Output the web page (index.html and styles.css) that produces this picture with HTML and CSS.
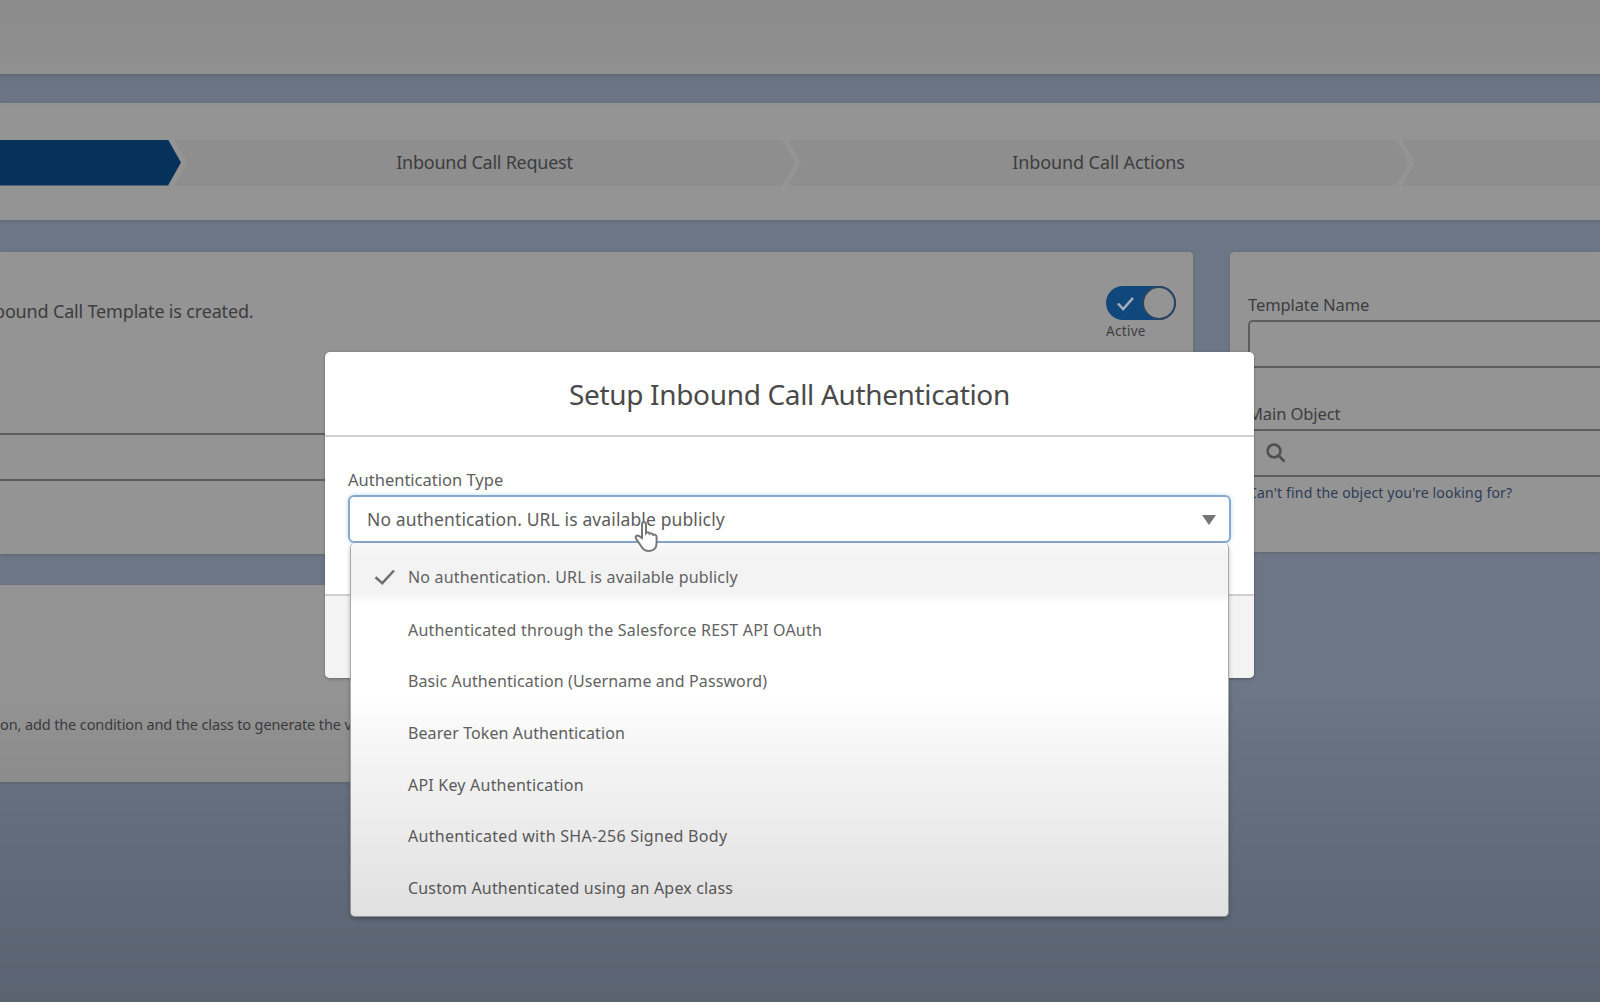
FILE: index.html
```html
<!DOCTYPE html>
<html lang="en">
<head>
    <meta charset="UTF-8" />
    <meta name="viewport" content="width=device-width, initial-scale=1.0"/>
    <title>Setup Inbound Call Authentication</title>
    <link rel="stylesheet" href="styles.css">
</head>
<body>
    <div class="page">
        <header class="page-header"></header>
        <nav class="path">
            <div class="step current"></div>
            <div class="step request">Inbound Call Request</div>
            <div class="step actions">Inbound Call Actions</div>
            <div class="step"></div>
        </nav>
        <main class="columns">
            <div class="main-column">
                <section class="card details">
                    <div class="details-top">
                        <p class="intro">bound Call Template is created.</p>
                        <div class="toggle">
                            <div class="switch">
                                <svg class="switch-check" viewBox="0 0 20 16"><path d="M2 8l5.500 6L18 2"/></svg>
                                <span class="knob"></span>
                            </div>
                            <span class="toggle-label">Active</span>
                        </div>
                    </div>
                    <div class="wide-field"></div>
                </section>
                <section class="card condition">
                    <p class="hint">on, add the condition and the class to generate the v</p>
                </section>
            </div>
            <aside class="card side">
                <p class="label name-label">Template Name</p>
                <div class="field"></div>
                <p class="label object-label">Main Object</p>
                <div class="field lookup">
                    <svg class="search" viewBox="0 0 20 20"><circle cx="8" cy="8" r="6.4"/><path d="M12.500 12.500l6 6"/></svg>
                </div>
                <a class="help">Can't find the object you're looking for?</a>
            </aside>
        </main>
    </div>

    <div class="modal">
        <div class="modal-header"><h2>Setup Inbound Call Authentication</h2></div>
        <div class="modal-body">
            <p class="auth-label">Authentication Type</p>
            <div class="combobox">
                <span class="combo-value">No authentication. URL is available publicly</span>
                <span class="arrow"></span>
                <ul class="dropdown">
                    <li class="selected">
                        <svg class="check" viewBox="0 0 22 16"><path d="M1.500 8.200l6.800 6L20 1.500"/></svg>
                        <span>No authentication. URL is available publicly</span>
                    </li>
                    <li class="wide">Authenticated through the Salesforce REST API OAuth</li>
                    <li class="narrow">Basic Authentication (Username and Password)</li>
                    <li class="narrow">Bearer Token Authentication</li>
                    <li class="wide">API Key Authentication</li>
                    <li class="widest">Authenticated with SHA-256 Signed Body</li>
                    <li>Custom Authenticated using an Apex class</li>
                </ul>
            </div>
        </div>
        <div class="modal-footer"></div>
    </div>

    <svg class="cursor" viewBox="0 0 26 34"><path d="M9 19V5.500c0-3.400 4-3.400 4 0V14c1-1.200 3.200-.8 3.600.8 1.200-1 3-.4 3.400 1 1.600-.8 3.600.2 3.600 2.200v6c0 5-3 8-7.600 8-4 0-6-1.500-8-5l-5-7.500c-1.200-2.400 1.400-4 3.200-2.300z"/></svg>
</body>
</html>
```

FILE: styles.css
```css
html,
body {
    margin: 0;
    width: 100%;
    height: 100%;
    overflow: hidden;
    background: #6c7686;
    color: #3c3d3f;
    font-family: "Noto Sans", "Open Sans", sans-serif;
}
* {
    box-sizing: border-box;
}
p,
h2,
ul {
    margin: 0;
    padding: 0;
}
svg {
    fill: none;
}
/* vignette over the whole window */
body::after {
    content: "";
    position: fixed;
    inset: 0;
    pointer-events: none;
    background: linear-gradient(rgba(0, 0, 0, .05), rgba(0, 0, 0, 0) 110px, rgba(0, 0, 0, 0) 695px, rgba(0, 0, 0, .035) 745px, rgba(0, 0, 0, .12) 915px, rgba(0, 0, 0, .16));
}
.page-header {
    height: 74px;
    background: #939393;
    box-shadow: 0 1px 3px #62676f;
}
.path {
    display: flex;
    align-items: center;
    height: 117px;
    margin-top: 29px;
    padding-top: 2px;
    overflow: hidden;
    background: #949494;
    box-shadow: 0 1px 3px #62676f;
}
.step {
    display: flex;
    flex: none;
    align-items: center;
    justify-content: center;
    width: 621px;
    height: 46px;
    margin-left: -7px;
    padding-bottom: 1px;
    background: #8e8e8e;
    clip-path: polygon(0 0, calc(100% - 13px) 0, 100% 50%, calc(100% - 13px) 100%, 0 100%, 13px 50%);
    font-size: 18px;
    letter-spacing: -.15px;
}
.request {
    letter-spacing: -.25px;
}
.actions {
    letter-spacing: -.1px;
}
.step.current {
    width: 181px;
    margin-left: 0;
    background: #06315a;
    clip-path: polygon(0 0, calc(100% - 13px) 0, 100% 50%, calc(100% - 13px) 100%, 0 100%);
}
.columns {
    display: flex;
    align-items: flex-start;
    gap: 37px;
    margin-top: 32px;
}
.main-column {
    display: flex;
    flex-direction: column;
    gap: 31px;
    width: 1193px;
}
.card {
    background: #949494;
    border-radius: 0 4px 4px 0;
    box-shadow: 0 1px 3px #62676f;
}
.details {
    height: 302px;
    padding-top: 34px;
}
.details-top {
    display: flex;
    justify-content: space-between;
    height: 147px;
    padding-right: 17px;
}
.intro {
    margin: 12px 0 0 -6px;
    font-size: 18px;
    letter-spacing: -.17px;
    line-height: 26px;
}
.switch {
    display: flex;
    align-items: center;
    justify-content: space-between;
    width: 70px;
    height: 34px;
    padding: 0 2px 0 10px;
    border-radius: 17px;
    background: #11487c;
}
.switch-check {
    width: 19px;
    height: 15px;
    stroke: #a5adb5;
    stroke-width: 2.6;
}
.knob {
    width: 30px;
    height: 30px;
    border-radius: 50%;
    background: #949494;
    box-shadow: 0 0 0 2px #2b4463;
}
.toggle-label {
    display: block;
    font-size: 13.5px;
    letter-spacing: .3px;
    line-height: 22px;
}
.wide-field {
    height: 48px;
    border: solid #5e5e5e;
    border-width: 2px 0;
}
.condition {
    height: 197px;
    padding-top: 127px;
}
.hint {
    font-size: 14.5px;
    letter-spacing: -.12px;
    line-height: 24px;
    white-space: nowrap;
}
.side {
    flex: 1;
    height: 300px;
    padding: 40px 0 0 18px;
    border-radius: 4px 0 0 4px;
}
.label {
    font-size: 16.5px;
    letter-spacing: -.1px;
    line-height: 26px;
}
.field {
    height: 48px;
    margin-top: 2px;
    border: 2px solid #5e5e5e;
    border-right: 0;
    border-radius: 5px 0 0 5px;
}
.object-label {
    margin-top: 33px;
}
.lookup {
    padding: 12px 0 0 16px;
}
.search {
    display: block;
    width: 20px;
    height: 20px;
    stroke: #505050;
    stroke-width: 2.6;
}
.help {
    display: block;
    margin-top: 5px;
    color: #2d3c55;
    font-size: 14px;
    letter-spacing: .17px;
    line-height: 22px;
}
.modal {
    position: absolute;
    top: 352px;
    left: 325px;
    width: 929px;
    height: 326px;
    border-radius: 5px;
    background: #fff;
    box-shadow: 0 1px 3px rgba(0, 0, 0, .3);
}
.modal-header {
    display: flex;
    align-items: center;
    justify-content: center;
    height: 85px;
    border-bottom: 2px solid #cfcfcf;
}
h2 {
    color: #4a4a4a;
    font-size: 28px;
    font-weight: 400;
    letter-spacing: -.34px;
}
.modal-body {
    height: 157px;
    padding: 30px 23px 0;
}
.auth-label {
    height: 28px;
    color: #606060;
    font-size: 16.5px;
    line-height: 26px;
}
.combobox {
    position: relative;
    display: flex;
    align-items: center;
    justify-content: space-between;
    height: 48px;
    padding: 0 13px 0 17px;
    border: 2px solid #86a8cc;
    border-radius: 6px;
    box-shadow: 0 0 4px #b5ddf7;
}
.combo-value {
    color: #5c5c5c;
    font-size: 17.5px;
    letter-spacing: .12px;
}
.arrow {
    margin-top: 2px;
    border: solid transparent;
    border-width: 10px 7px 0;
    border-top-color: #757575;
}
.dropdown {
    position: absolute;
    top: 46px;
    left: 0;
    width: 879px;
    height: 374px;
    border: 1px solid #a8a8a8;
    border-top: 0;
    border-radius: 5px;
    background: #fff;
    box-shadow: 0 2px 4px rgba(0, 0, 0, .25);
    color: #626262;
    font-size: 16px;
    letter-spacing: .17px;
    list-style: none;
    overflow: hidden;
}
.dropdown li {
    display: flex;
    align-items: center;
    height: 51.6px;
    padding-left: 57px;
}
.dropdown .selected {
    height: 61px;
    padding: 6px 0 0 23px;
    background: linear-gradient(#fafafa, #f3f3f3 12px, #f3f3f3 50px, #fff);
}
.dropdown .narrow {
    letter-spacing: .1px;
}
.dropdown .wide {
    letter-spacing: .21px;
}
.dropdown .widest {
    letter-spacing: .3px;
}
.check {
    width: 22px;
    height: 16px;
    margin-right: 12px;
    stroke: #707070;
    stroke-width: 2.5;
}
.modal-footer {
    height: 84px;
    border-top: 2px solid #d0d0d0;
    border-radius: 0 0 5px 5px;
    background: #f3f3f3;
}
.cursor {
    position: absolute;
    top: 519px;
    left: 633px;
    width: 26px;
    height: 34px;
    fill: #fff;
    stroke: #777;
    stroke-width: 2;
}
```
